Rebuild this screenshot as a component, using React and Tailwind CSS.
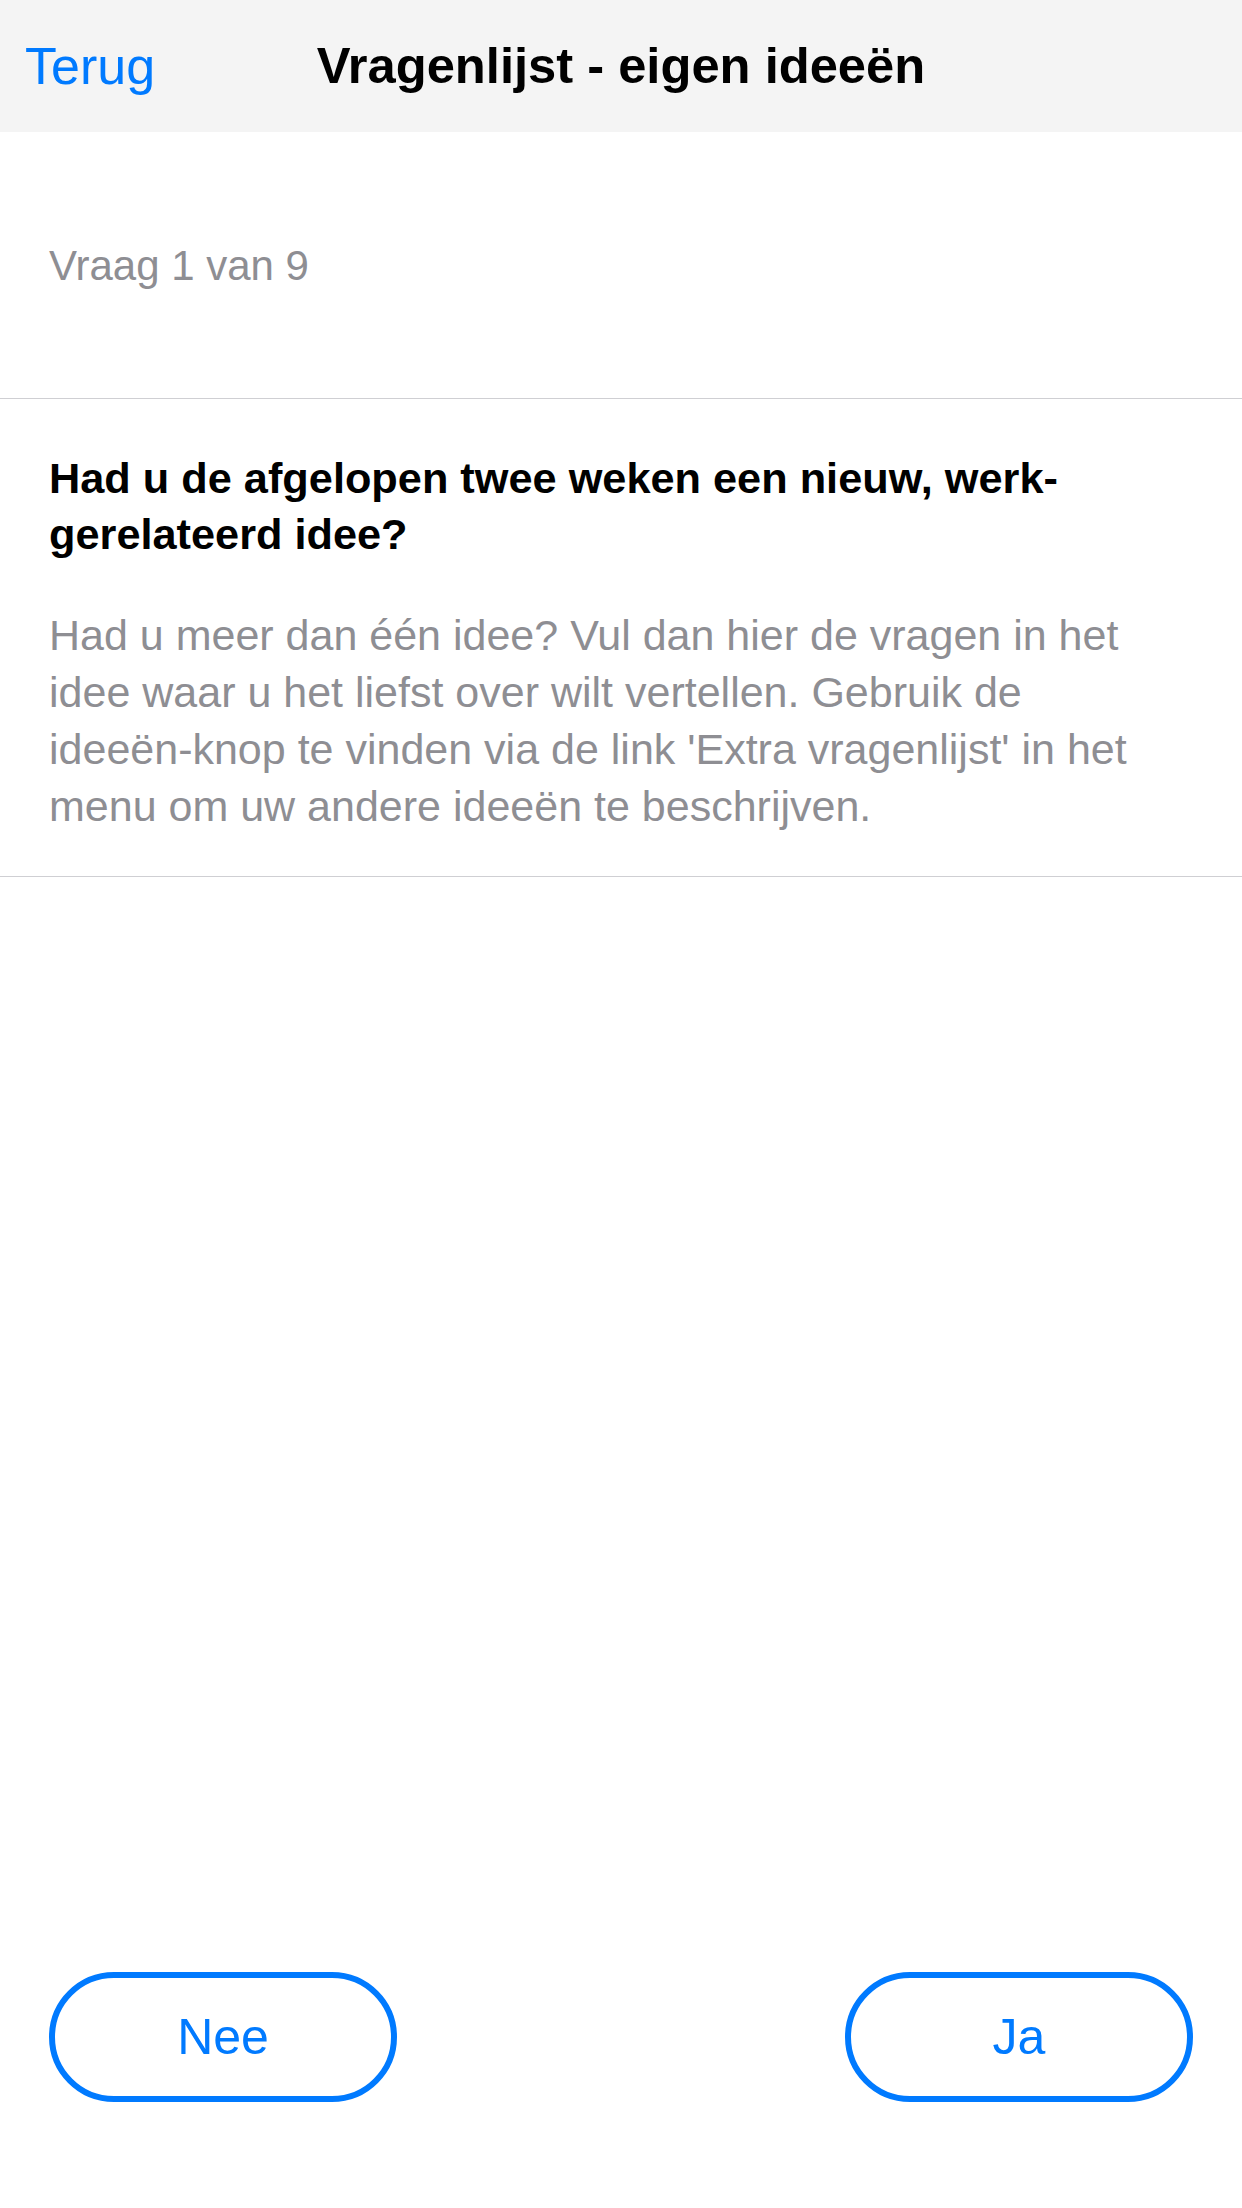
import React from "react";

const DESCRIPTION = [
  "Had u meer dan één idee? Vul dan hier de vragen in het",
  "idee waar u het liefst over wilt vertellen. Gebruik de",
  "ideeën-knop te vinden via de link 'Extra vragenlijst' in het",
  "menu om uw andere ideeën te beschrijven.",
];

function AnswerButton({ label }) {
  return (
    <button className="w-[348px] h-[130px] rounded-full border-[6px] border-[#007aff] bg-white text-[50px] text-[#007aff] flex items-center justify-center">
      {label}
    </button>
  );
}

export default function App() {
  return (
    <div
      className="h-screen flex flex-col bg-white"
      style={{ fontFamily: '"Liberation Sans", Arial, sans-serif' }}
    >
      {/* Navigatiebalk */}
      <div className="relative h-[132px] shrink-0 bg-[#f4f4f4] flex items-center justify-center">
        <span className="absolute left-[25px] top-1/2 -translate-y-1/2 text-[52px] text-[#007aff]">
          Terug
        </span>
        <h1 className="text-[50.7px] font-bold text-black leading-none">
          Vragenlijst - eigen ideeën
        </h1>
      </div>

      {/* Voortgang */}
      <div className="h-[267px] shrink-0 flex items-center px-[49px] border-b border-[#cfcfd3]">
        <span className="text-[42px] text-[#8e8e93]">Vraag 1 van 9</span>
      </div>

      {/* Vraag */}
      <div className="shrink-0 px-[49px] pt-[51px] pb-[41px] border-b border-[#cfcfd3]">
        <p className="text-[43.3px] leading-[56px] font-bold text-black">
          Had u de afgelopen twee weken een nieuw, werk-
          <br />
          gerelateerd idee?
        </p>
        <div className="mt-[45px] text-[43px] leading-[57px] text-[#8e8e93]">
          {DESCRIPTION.map((line) => (
            <div key={line} className="whitespace-nowrap">
              {line}
            </div>
          ))}
        </div>
      </div>

      <div className="flex-1" />

      {/* Antwoorden */}
      <div className="shrink-0 flex justify-between px-[49px] pb-[106px]">
        <AnswerButton label="Nee" />
        <AnswerButton label="Ja" />
      </div>
    </div>
  );
}
